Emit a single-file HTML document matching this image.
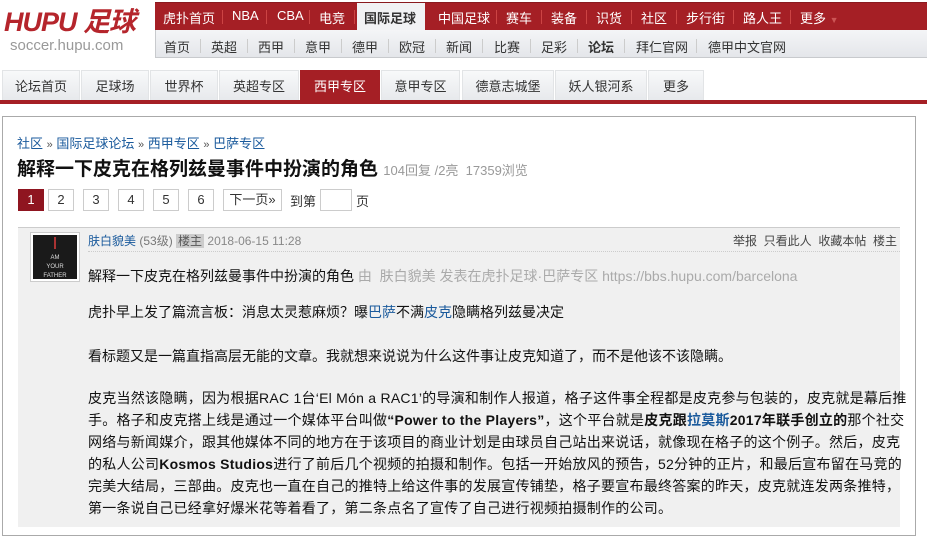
<!DOCTYPE html>
<html><head><meta charset="utf-8"><style>
*{margin:0;padding:0;box-sizing:border-box}
body{width:927px;height:512px;overflow:hidden;background:#fff;font-family:"Liberation Sans","Noto Sans CJK SC",sans-serif;position:relative;color:#222}
.a{position:absolute;white-space:nowrap}
.logo{left:4px;top:7px;font:italic bold 27px/30px "Liberation Sans","Noto Sans CJK SC",sans-serif;color:#b5252c;letter-spacing:-1px}
.dom{left:10px;top:37px;font-size:15px;color:#999}
.nav1{left:155px;top:2px;width:772px;height:28px;background:#a51f25;border-top:1px solid #8a1a1f}
.nav2{left:155px;top:30px;width:772px;height:28px;background:linear-gradient(#f4f5f7,#e4e6ea);border-bottom:1px solid #c8cacd;border-left:1px solid #c8cacd}
.n1{color:#fff;font-size:13px;top:8px}
.n2{color:#333;font-size:13px;top:37px}
.sep1{top:10px;width:1px;height:14px;background:#c44}
.sep2{top:39px;width:1px;height:14px;background:#ccc}
.tab{top:70px;height:30px;background:linear-gradient(#f8f9fa,#e7e9ec);border:1px solid #e2e4e6;border-bottom:none;font-size:13px;color:#333;text-align:center;line-height:31px}
.red{left:0;top:100px;width:927px;height:4px;background:#a51f25}
.box{left:2px;top:116px;width:914px;height:420px;border:1px solid #aaa}
.bc{left:17px;top:133px;font-size:13px;color:#1a5a9c}
.title{left:17px;top:154px;font-size:19px;font-weight:bold;color:#111}
.pg{top:189px;height:22px;width:26px;border:1px solid #ccc;font-size:13px;text-align:center;line-height:20px;color:#333}
.post{left:18px;top:227px;width:882px;height:300px;background:#f0f0f0;border-top:1px solid #ccc}
.p{left:88px;font-size:14px;color:#111}
b{font-weight:bold}
.lk{color:#1a5a9c}
</style></head><body>
<div class="a logo">HUPU 足球</div>
<div class="a dom">soccer.hupu.com</div>
<div class="a nav1"></div>
<div class="a" style="left:357px;top:3px;width:68px;height:27px;background:#f1f2f4"></div>
<div class="a nav2"></div>
<span class="a n1" style="left:163px">虎扑首页</span>
<span class="a n1" style="left:232px">NBA</span>
<span class="a n1" style="left:277px">CBA</span>
<span class="a n1" style="left:319px">电竞</span>
<span class="a n1" style="left:364px;color:#333;font-weight:bold">国际足球</span>
<span class="a n1" style="left:438px">中国足球</span>
<span class="a n1" style="left:506px">赛车</span>
<span class="a n1" style="left:551px">装备</span>
<span class="a n1" style="left:596px">识货</span>
<span class="a n1" style="left:641px">社区</span>
<span class="a n1" style="left:686px">步行街</span>
<span class="a n1" style="left:743px">路人王</span>
<span class="a n1" style="left:800px">更多 <span style="color:#c55;font-size:9px">▼</span></span>
<div class="a sep1" style="left:222px"></div><div class="a sep1" style="left:266px"></div><div class="a sep1" style="left:309px"></div><div class="a sep1" style="left:354px"></div><div class="a sep1" style="left:496px"></div><div class="a sep1" style="left:541px"></div><div class="a sep1" style="left:586px"></div><div class="a sep1" style="left:631px"></div><div class="a sep1" style="left:676px"></div><div class="a sep1" style="left:733px"></div><div class="a sep1" style="left:790px"></div>
<span class="a n2" style="left:164px">首页</span><span class="a n2" style="left:211px">英超</span><span class="a n2" style="left:258px">西甲</span><span class="a n2" style="left:305px">意甲</span><span class="a n2" style="left:352px">德甲</span><span class="a n2" style="left:399px">欧冠</span><span class="a n2" style="left:446px">新闻</span><span class="a n2" style="left:494px">比赛</span><span class="a n2" style="left:541px">足彩</span><span class="a n2" style="left:588px;font-weight:bold">论坛</span><span class="a n2" style="left:636px">拜仁官网</span><span class="a n2" style="left:708px">德甲中文官网</span>
<div class="a sep2" style="left:200px"></div><div class="a sep2" style="left:247px"></div><div class="a sep2" style="left:294px"></div><div class="a sep2" style="left:341px"></div><div class="a sep2" style="left:388px"></div><div class="a sep2" style="left:435px"></div><div class="a sep2" style="left:482px"></div><div class="a sep2" style="left:530px"></div><div class="a sep2" style="left:577px"></div><div class="a sep2" style="left:624px"></div><div class="a sep2" style="left:696px"></div>
<div class="a tab" style="left:2px;width:78px">论坛首页</div>
<div class="a tab" style="left:81px;width:68px">足球场</div>
<div class="a tab" style="left:150px;width:68px">世界杯</div>
<div class="a tab" style="left:219px;width:80px">英超专区</div>
<div class="a tab" style="left:300px;width:80px;background:#a51f25;color:#fff;border-color:#a51f25">西甲专区</div>
<div class="a tab" style="left:381px;width:79px">意甲专区</div>
<div class="a tab" style="left:462px;width:92px">德意志城堡</div>
<div class="a tab" style="left:555px;width:92px">妖人银河系</div>
<div class="a tab" style="left:648px;width:56px">更多</div>
<div class="a red"></div>
<div class="a box"></div>
<div class="a bc">社区 <span style="color:#555;font-size:11px">»</span> 国际足球论坛 <span style="color:#555;font-size:11px">»</span> 西甲专区 <span style="color:#555;font-size:11px">»</span> 巴萨专区</div>
<div class="a title">解释一下皮克在格列兹曼事件中扮演的角色 <span style="font-size:13px;font-weight:normal;color:#999">104回复 /2亮&nbsp; 17359浏览</span></div>
<div class="a pg" style="left:18px;background:#8f1520;color:#fff;border-color:#8f1520">1</div>
<div class="a pg" style="left:48px">2</div>
<div class="a pg" style="left:83px">3</div>
<div class="a pg" style="left:118px">4</div>
<div class="a pg" style="left:153px">5</div>
<div class="a pg" style="left:188px">6</div>
<div class="a pg" style="left:223px;width:59px">下一页»</div>
<span class="a" style="left:290px;top:191px;font-size:13px;color:#333">到第</span>
<div class="a pg" style="left:320px;width:32px"></div>
<span class="a" style="left:356px;top:191px;font-size:13px;color:#333">页</span>
<div class="a post"></div>
<div class="a" style="left:31px;top:233px;width:48px;height:48px;background:#1a1a1a;border:2px solid #fff;outline:1px solid #ccc;color:#ddd;font-size:6px;text-align:center;line-height:9px;padding-top:19px">AM<br>YOUR<br>FATHER</div>
<div class="a" style="left:54px;top:237px;width:2px;height:12px;background:#a33"></div>
<span class="a" style="left:88px;top:232px;font-size:12px;color:#1a5a9c">肤白貌美 <span style="color:#777">(53级)</span> <span style="background:#ccc;color:#555;padding:0 2px">楼主</span> <span style="color:#888">2018-06-15 11:28</span></span>
<span class="a" style="left:733px;top:232px;font-size:12px;color:#444">举报&nbsp; 只看此人&nbsp; 收藏本帖&nbsp; 楼主</span>
<div class="a" style="left:88px;top:251px;width:812px;border-top:1px dotted #ccc"></div>
<span class="a p" style="top:266px">解释一下皮克在格列兹曼事件中扮演的角色 <span style="color:#aaa">由&nbsp; 肤白貌美 发表在虎扑足球·巴萨专区 https://bbs.hupu.com/barcelona</span></span>
<span class="a p" style="top:302px">虎扑早上发了篇流言板：消息太灵惹麻烦？曝<span class="lk">巴萨</span>不满<span class="lk">皮克</span>隐瞒格列兹曼决定</span>
<span class="a p" style="top:346px">看标题又是一篇直指高层无能的文章。我就想来说说为什么这件事让皮克知道了，而不是他该不该隐瞒。</span>
<div class="a p" style="top:387px;width:820px;white-space:normal;line-height:22px;font-size:14px;letter-spacing:0.25px">皮克当然该隐瞒，因为根据RAC 1台‘El Món a RAC1’的导演和制作人报道，格子这件事全程都是皮克参与包装的，皮克就是幕后推手。格子和皮克搭上线是通过一个媒体平台叫做<b>“Power to the Players”</b>，这个平台就是<b>皮克跟<span class="lk">拉莫斯</span>2017年联手创立的</b>那个社交网络与新闻媒介，跟其他媒体不同的地方在于该项目的商业计划是由球员自己站出来说话，就像现在格子的这个例子。然后，皮克的私人公司<b>Kosmos Studios</b>进行了前后几个视频的拍摄和制作。包括一开始放风的预告，52分钟的正片，和最后宣布留在马竞的完美大结局，三部曲。皮克也一直在自己的推特上给这件事的发展宣传铺垫，格子要宣布最终答案的昨天，皮克就连发两条推特，第一条说自己已经拿好爆米花等着看了，第二条点名了宣传了自己进行视频拍摄制作的公司。</div>
</body></html>
